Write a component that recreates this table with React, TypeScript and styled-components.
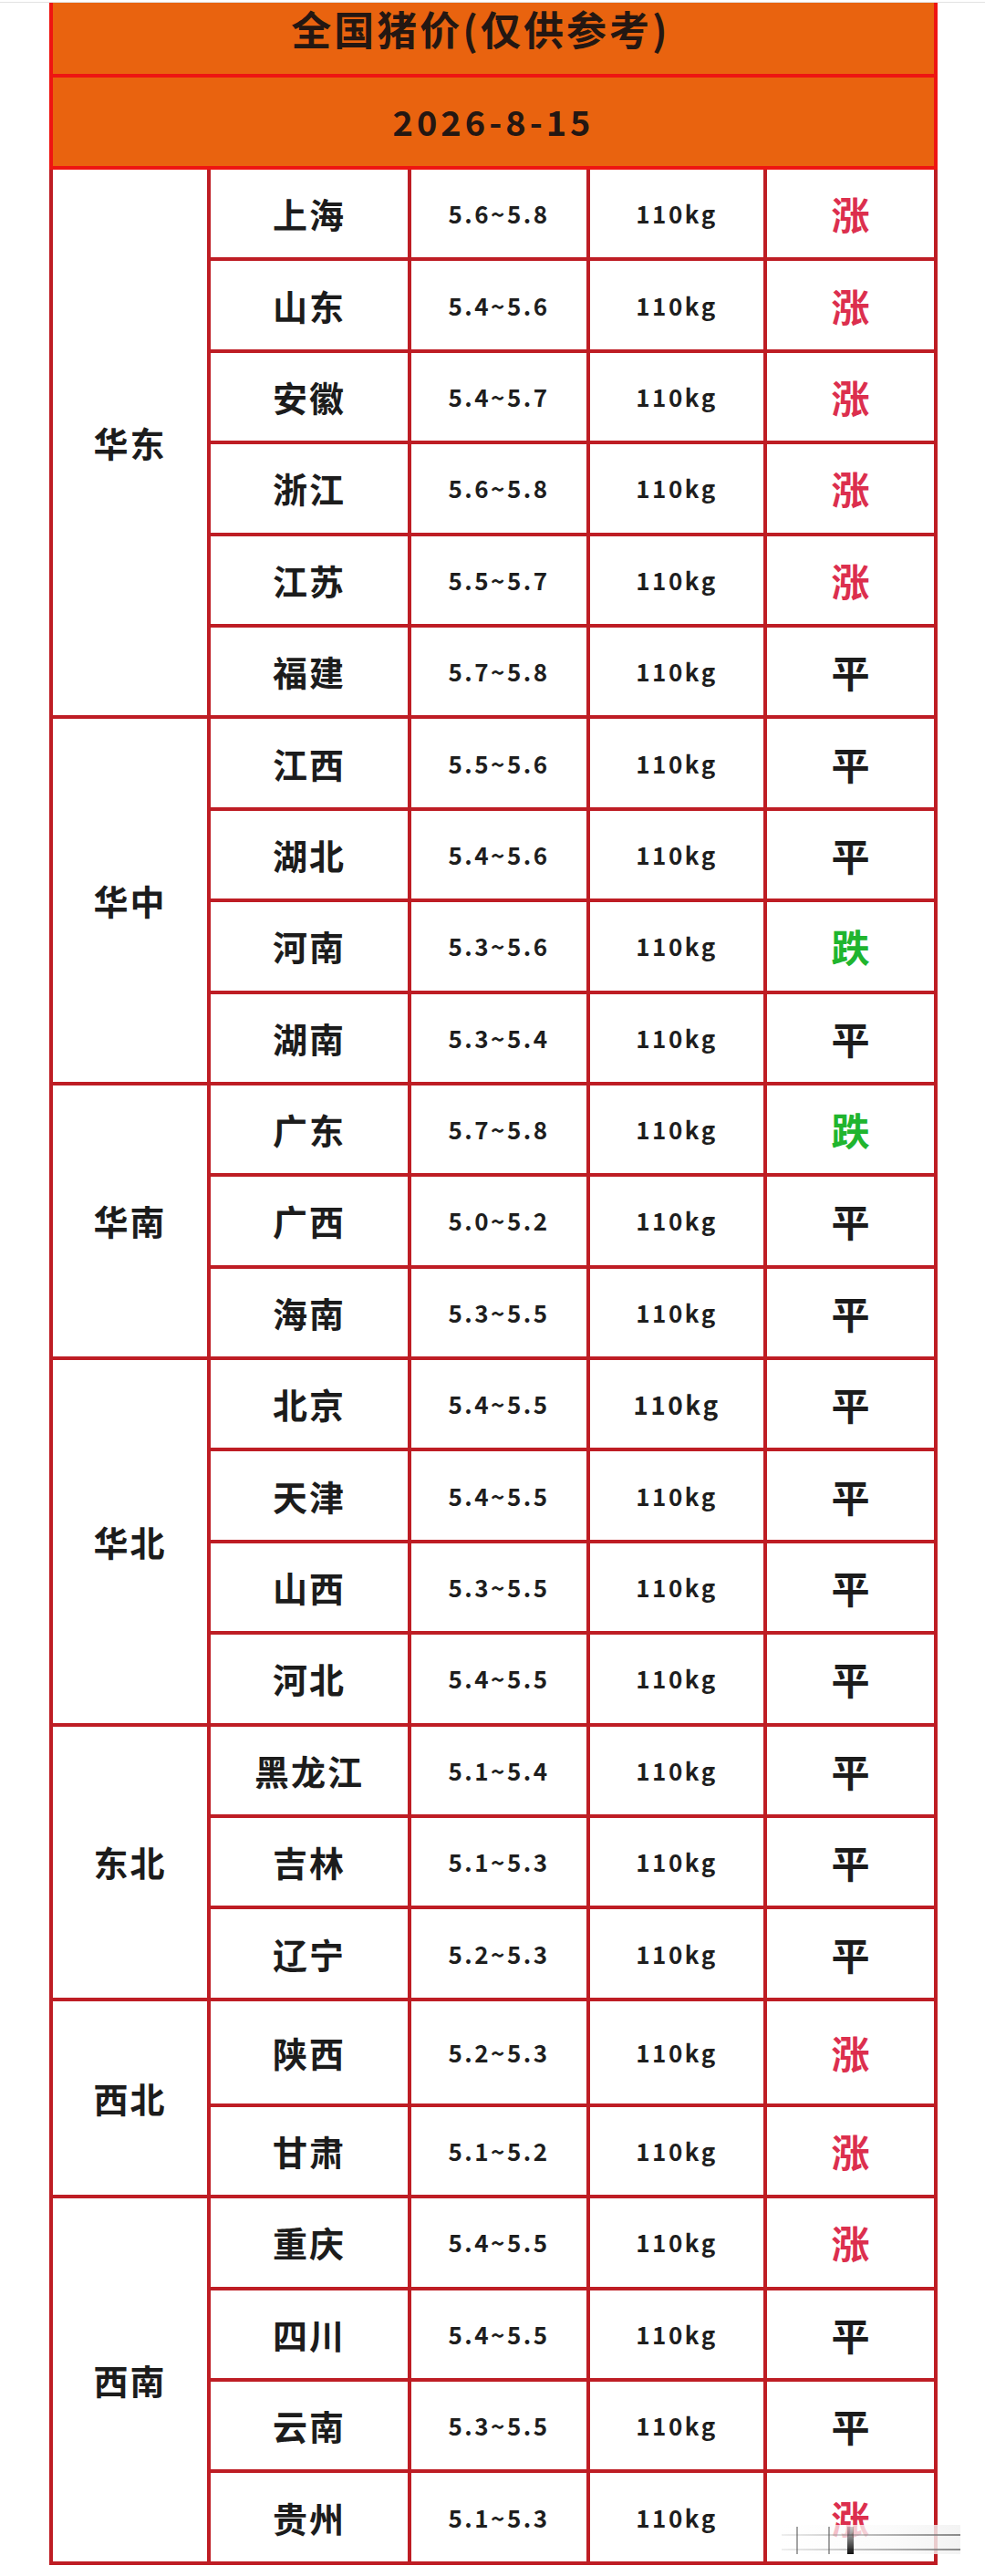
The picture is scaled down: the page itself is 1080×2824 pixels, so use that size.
import React from "react";
import styled, { createGlobalStyle } from "styled-components";

const GlobalStyle = createGlobalStyle`
  html, body {
    margin: 0;
    padding: 0;
    background: #ffffff;
  }
  body {
    font-family: "Noto Sans CJK SC", "Noto Sans", sans-serif;
    color: #1d1d1d;
  }
`;

const Page = styled.div`
  position: relative;
  min-height: 2824px;
  padding-top: 2px;
  box-sizing: border-box;
`;

const TopRule = styled.div`
  height: 1px;
  background: #e3e3e3;
`;

const Table = styled.table`
  margin-left: 54px;
  width: 974px;
  border-collapse: collapse;
  table-layout: fixed;
`;

const HeadRow = styled.tr<{ $h: number }>`
  height: ${(p) => p.$h}px;
`;

const HeadCell = styled.td<{ $top?: boolean }>`
  background: #e9630f;
  border: 4px solid #ee1512;
  border-top: ${(p) => (p.$top ? "0" : "4px solid #ee1512")};
  padding: ${(p) => (p.$top ? "0 28px 20px 0" : "0")};
  text-align: center;
  vertical-align: middle;
  color: #241712;
  font-weight: 700;
`;

const Title = styled.span`
  font-size: 44px;
  letter-spacing: 3px;
  line-height: 1;
`;

const DateText = styled.span`
  font-size: 38px;
  letter-spacing: 4px;
  line-height: 1;
`;

const Row = styled.tr<{ $h: number }>`
  height: ${(p) => p.$h}px;
`;

const Cell = styled.td`
  border: 4px solid #be1d24;
  padding: 0;
  text-align: center;
  vertical-align: middle;
  background: #ffffff;
  font-weight: 700;
  line-height: 1;
`;

const Region = styled(Cell)`
  font-size: 38px;
  letter-spacing: 2px;
  color: #1c1c1c;
`;

const Province = styled(Cell)`
  font-size: 38px;
  letter-spacing: 2px;
  color: #1c1c1c;
`;

const Figure = styled(Cell)<{ $large?: boolean }>`
  font-size: ${(p) => (p.$large ? 28 : 26)}px;
  letter-spacing: 2.5px;
  color: #1e1e1e;
`;

const trendColour: Record<string, string> = {
  涨: "#dc2f4e",
  跌: "#20b52e",
  平: "#1c1c1c",
};

const Trend = styled(Cell)<{ $t: string }>`
  font-size: 42px;
  color: ${(p) => trendColour[p.$t]};
`;

// blurred watermark lying over the last row
const Watermark = styled.div`
  position: absolute;
  left: 857px;
  top: 2768px;
  width: 196px;
  height: 32px;
  background: linear-gradient(
    90deg,
    rgba(255, 255, 255, 0.55),
    rgba(250, 250, 250, 0.85) 60%,
    rgba(240, 240, 240, 0.8)
  );
  pointer-events: none;
`;

const WmLine = styled.span<{ $y: number }>`
  position: absolute;
  left: 0;
  right: 0;
  top: ${(p) => p.$y}px;
  height: 2px;
  background: linear-gradient(90deg, rgba(200, 200, 200, 0.3), rgba(110, 110, 110, 0.8));
`;

const WmBar = styled.span<{ $x: number; $w: number; $dark?: boolean }>`
  position: absolute;
  top: 2px;
  bottom: 0;
  left: ${(p) => p.$x}px;
  width: ${(p) => p.$w}px;
  background: ${(p) =>
    p.$dark
      ? "linear-gradient(180deg, rgba(20,20,20,0.2), #111)"
      : "rgba(90, 90, 90, 0.55)"};
`;

type Entry = { province: string; price: string; trend: string; large?: boolean };

const regions: Array<{ name: string; rows: Entry[] }> = [
  {
    name: "华东",
    rows: [
      { province: "上海", price: "5.6~5.8", trend: "涨" },
      { province: "山东", price: "5.4~5.6", trend: "涨" },
      { province: "安徽", price: "5.4~5.7", trend: "涨" },
      { province: "浙江", price: "5.6~5.8", trend: "涨" },
      { province: "江苏", price: "5.5~5.7", trend: "涨" },
      { province: "福建", price: "5.7~5.8", trend: "平" },
    ],
  },
  {
    name: "华中",
    rows: [
      { province: "江西", price: "5.5~5.6", trend: "平" },
      { province: "湖北", price: "5.4~5.6", trend: "平" },
      { province: "河南", price: "5.3~5.6", trend: "跌" },
      { province: "湖南", price: "5.3~5.4", trend: "平" },
    ],
  },
  {
    name: "华南",
    rows: [
      { province: "广东", price: "5.7~5.8", trend: "跌" },
      { province: "广西", price: "5.0~5.2", trend: "平" },
      { province: "海南", price: "5.3~5.5", trend: "平" },
    ],
  },
  {
    name: "华北",
    rows: [
      { province: "北京", price: "5.4~5.5", trend: "平", large: true },
      { province: "天津", price: "5.4~5.5", trend: "平" },
      { province: "山西", price: "5.3~5.5", trend: "平" },
      { province: "河北", price: "5.4~5.5", trend: "平" },
    ],
  },
  {
    name: "东北",
    rows: [
      { province: "黑龙江", price: "5.1~5.4", trend: "平" },
      { province: "吉林", price: "5.1~5.3", trend: "平" },
      { province: "辽宁", price: "5.2~5.3", trend: "平" },
    ],
  },
  {
    name: "西北",
    rows: [
      { province: "陕西", price: "5.2~5.3", trend: "涨" },
      { province: "甘肃", price: "5.1~5.2", trend: "涨" },
    ],
  },
  {
    name: "西南",
    rows: [
      { province: "重庆", price: "5.4~5.5", trend: "涨" },
      { province: "四川", price: "5.4~5.5", trend: "平" },
      { province: "云南", price: "5.3~5.5", trend: "平" },
      { province: "贵州", price: "5.1~5.3", trend: "涨" },
    ],
  },
];

const colWidths = [173, 220, 196, 194, 187];

const App = () => {
  return (
    <Page>
      <GlobalStyle />
      <TopRule />
      <Table>
        <colgroup>
          {colWidths.map((w, i) => (
            <col key={i} style={{ width: w }} />
          ))}
        </colgroup>
        <tbody>
          <HeadRow $h={80}>
            <HeadCell colSpan={5} $top>
              <Title>全国猪价(仅供参考)</Title>
            </HeadCell>
          </HeadRow>
          <HeadRow $h={101}>
            <HeadCell colSpan={5}>
              <DateText>2026-8-15</DateText>
            </HeadCell>
          </HeadRow>
          {regions.map(({ name, rows }) =>
            rows.map((r, i) => (
              <Row key={r.province} $h={r.province === "陕西" ? 116 : 100.4}>
                {i === 0 && <Region rowSpan={rows.length}>{name}</Region>}
                <Province>{r.province}</Province>
                <Figure>{r.price}</Figure>
                <Figure $large={r.large}>110kg</Figure>
                <Trend $t={r.trend}>{r.trend}</Trend>
              </Row>
            ))
          )}
        </tbody>
      </Table>
      <Watermark>
        <WmLine $y={10} />
        <WmLine $y={26} />
        <WmBar $x={16} $w={2} />
        <WmBar $x={51} $w={2} />
        <WmBar $x={72} $w={7} $dark />
      </Watermark>
    </Page>
  );
};

export default App;
